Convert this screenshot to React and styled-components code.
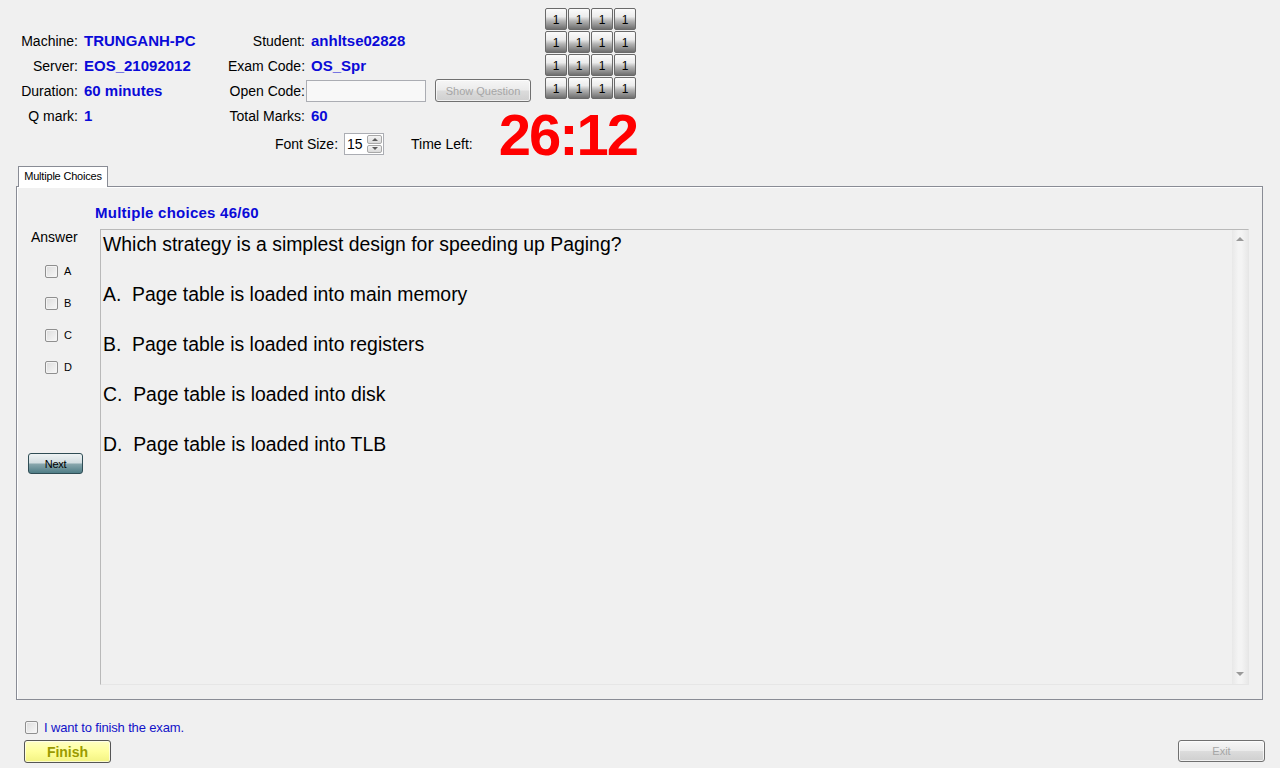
import React from "react"
import styled, { createGlobalStyle } from "styled-components"

const GlobalStyle = createGlobalStyle`
  body {
    margin: 0;
    background: #f0f0f0;
    font-family: "Liberation Sans", Arial, sans-serif;
    color: #000;
  }
`

const Screen = styled.div`
  width: 1280px;
  height: 768px;
  overflow: hidden;
  display: flex;
  flex-direction: column;
`

const Header = styled.div`
  display: flex;
  align-items: flex-start;
  padding: 8px 0 0 20px;
`

const LeftBlock = styled.div`
  display: flex;
  flex-direction: column;
  margin-top: 20px;
`

const InfoRow = styled.div`
  display: flex;
`

const InfoGrid = styled.div`
  display: grid;
  grid-template-columns: ${p => p.labelWidth}px auto;
  grid-auto-rows: 25px;
  column-gap: 1px;
  align-items: center;
  width: ${p => (p.width ? `${p.width}px` : "auto")};
`

const Label = styled.span`
  font-size: 14px;
  text-align: right;
  white-space: nowrap;
`

const Value = styled.span`
  font-size: 15px;
  font-weight: bold;
  color: #0a0ad8;
  padding-left: 5px;
  white-space: nowrap;
`

const CodeCell = styled.div`
  display: flex;
  align-items: center;
  gap: 9px;
`

const TextBox = styled.div`
  width: 120px;
  height: 22px;
  box-sizing: border-box;
  border: 1px solid #abadb3;
  background: #f8f8f8;
`

const WinButton = styled.button`
  width: ${p => p.w}px;
  height: ${p => p.h}px;
  box-sizing: border-box;
  padding: 0;
  border: 1px solid #707070;
  border-radius: 3px;
  background: linear-gradient(#f6f6f6, #ebebeb 48%, #dcdcdc 52%, #cfcfcf);
  color: #a6a6a6;
  font-family: "Liberation Sans", Arial, sans-serif;
  font-size: 11px;
  box-shadow: inset 0 0 0 1px rgba(255, 255, 255, 0.7);
`

const FontRow = styled.div`
  display: flex;
  align-items: center;
  height: 22px;
  margin-top: 5px;
  padding-left: 255px;
`

const Spinner = styled.div`
  display: flex;
  width: 40px;
  height: 22px;
  box-sizing: border-box;
  margin-left: 6px;
  border: 1px solid #abadb3;
  background: #fff;
`

const SpinValue = styled.span`
  flex: 1;
  font-size: 14px;
  line-height: 20px;
  padding-left: 2px;
`

const SpinButtons = styled.div`
  display: flex;
  flex-direction: column;
  width: 15px;
  gap: 1px;
  padding: 1px 1px 1px 0;
`

const SpinButton = styled.div`
  flex: 1;
  display: flex;
  align-items: center;
  justify-content: center;
  border: 1px solid #a8a8a8;
  border-radius: 2px;
  background: linear-gradient(#f4f4f4, #dadada);
`

const Arrow = styled.span`
  width: 0;
  height: 0;
  border-left: 3px solid transparent;
  border-right: 3px solid transparent;
  ${p =>
    p.down
      ? "border-top: 3px solid #5a5a5a;"
      : "border-bottom: 3px solid #5a5a5a;"}
`

const TimeLabel = styled(Label)`
  margin-left: 27px;
`

const RightBlock = styled.div`
  width: 91px;
  display: flex;
  flex-direction: column;
  align-items: flex-end;
  margin-left: 14px;
`

const QuestionGrid = styled.div`
  display: grid;
  grid-template-columns: repeat(4, 22px);
  grid-auto-rows: 22px;
  gap: 1px;
`

const QButton = styled.div`
  box-sizing: border-box;
  border: 1px solid #6a6a6a;
  border-radius: 2px;
  background: linear-gradient(#fbfbfb, #ececec 38%, #b4b4b4 60%, #6e6e6e);
  display: flex;
  align-items: center;
  justify-content: center;
  font-size: 12px;
  padding-top: 1px;
`

const Timer = styled.div`
  margin-top: 6px;
  margin-right: -1px;
  font-size: 58px;
  line-height: 60px;
  font-weight: bold;
  letter-spacing: -2px;
  color: #ff0000;
  white-space: nowrap;
`

const TabArea = styled.div`
  display: flex;
  flex-direction: column;
  margin: 1px 0 0 16px;
  width: 1247px;
`

const TabStrip = styled.div`
  display: flex;
  padding-left: 2px;
  position: relative;
  z-index: 1;
  margin-bottom: -1px;
`

const Tab = styled.div`
  width: 90px;
  height: 21px;
  box-sizing: border-box;
  border: 1px solid #898c95;
  border-bottom: none;
  background: #fff;
  font-size: 11px;
  line-height: 19px;
  text-align: center;
  letter-spacing: -0.2px;
`

const TabPanel = styled.div`
  height: 514px;
  box-sizing: border-box;
  border: 1px solid #898c95;
  box-shadow: inset 1px 1px 0 #fff;
  display: flex;
  flex-direction: column;
  padding: 18px 13px 14px 0;
`

const SectionTitle = styled.div`
  font-size: 15px;
  font-weight: bold;
  line-height: 16px;
  letter-spacing: 0.25px;
  color: #0a0ad8;
  padding-left: 78px;
`

const Body = styled.div`
  flex: 1;
  display: flex;
  margin-top: 8px;
`

const AnswerCol = styled.div`
  width: 83px;
  display: flex;
  flex-direction: column;
`

const AnswerTitle = styled.div`
  font-size: 14px;
  line-height: 16px;
  padding-left: 14px;
`

const Choices = styled.div`
  display: flex;
  flex-direction: column;
  margin-top: 10px;
  padding-left: 28px;
`

const ChoiceRow = styled.label`
  display: flex;
  align-items: center;
  height: 32px;
  gap: 6px;
  font-size: 11px;
`

const Check = styled.span`
  width: 13px;
  height: 13px;
  box-sizing: border-box;
  border: 1px solid #8f8f8f;
  border-radius: 2px;
  background: linear-gradient(135deg, #dcdcdc, #f8f8f8);
  box-shadow: inset 0 0 0 1px #f4f4f4;
  flex: none;
`

const NextButton = styled.button`
  width: 55px;
  height: 21px;
  margin: 70px 0 0 11px;
  padding: 0;
  box-sizing: border-box;
  border: 1px solid #2f4d55;
  border-radius: 3px;
  background: linear-gradient(#eef3f4, #d3dee1 45%, #86a5ab 55%, #4f7d86);
  font-family: "Liberation Sans", Arial, sans-serif;
  font-size: 11px;
  letter-spacing: -0.3px;
  color: #000;
`

const QuestionBox = styled.div`
  flex: 1;
  display: flex;
  border: 1px solid #b9b9b9;
  border-right-color: #e6e6e6;
  border-bottom-color: #e6e6e6;
  background: #f0f0f0;
`

const QuestionText = styled.div`
  flex: 1;
  padding: 2px 0 0 2px;
  font-size: 19.4px;
  line-height: 25px;
  white-space: pre-wrap;
`

const ScrollTrack = styled.div`
  width: 16px;
  display: flex;
  flex-direction: column;
  justify-content: space-between;
  align-items: center;
  padding: 7px 0 8px;
  background: linear-gradient(90deg, #e8e8e8, #f4f4f4 40%, #f4f4f4 60%, #e8e8e8);
`

const ScrollArrow = styled.span`
  width: 0;
  height: 0;
  border-left: 4px solid transparent;
  border-right: 4px solid transparent;
  ${p =>
    p.down
      ? "border-top: 4px solid #9a9a9a;"
      : "border-bottom: 4px solid #9a9a9a;"}
`

const Footer = styled.div`
  display: flex;
  flex-direction: column;
  padding-right: 15px;
`

const FinishRow = styled.label`
  display: flex;
  align-items: center;
  gap: 6px;
  height: 16px;
  margin-top: 19px;
  padding-left: 25px;
  font-size: 13px;
  color: #1212c8;
  letter-spacing: -0.15px;
`

const ButtonRow = styled.div`
  display: flex;
  justify-content: space-between;
  align-items: flex-start;
  margin-top: 5px;
  padding-left: 24px;
`

const FinishButton = styled.button`
  width: 87px;
  height: 23px;
  padding: 0;
  box-sizing: border-box;
  border: 1px solid #555;
  border-radius: 3px;
  background: linear-gradient(#ffffc4, #ffff9c 50%, #f3f382);
  box-shadow: inset 0 0 0 1px rgba(255, 255, 255, 0.6);
  font-family: "Liberation Sans", Arial, sans-serif;
  font-size: 14px;
  font-weight: bold;
  color: #9a9a00;
`

const header = [
  ["Machine:", "TRUNGANH-PC"],
  ["Server:", "EOS_21092012"],
  ["Duration:", "60 minutes"],
  ["Q mark:", "1"],
]

const choices = ["A", "B", "C", "D"]

const question = `Which strategy is a simplest design for speeding up Paging?

A.  Page table is loaded into main memory

B.  Page table is loaded into registers

C.  Page table is loaded into disk

D.  Page table is loaded into TLB`

export default function App() {
  return (
    <Screen>
      <GlobalStyle />
      <Header>
        <LeftBlock>
          <InfoRow>
            <InfoGrid labelWidth={58} width={208}>
              {header.map(([l, v]) => (
                <React.Fragment key={l}>
                  <Label>{l}</Label>
                  <Value>{v}</Value>
                </React.Fragment>
              ))}
            </InfoGrid>
            <InfoGrid labelWidth={77}>
              <Label>Student:</Label>
              <Value>anhltse02828</Value>
              <Label>Exam Code:</Label>
              <Value>OS_Spr</Value>
              <Label>Open Code:</Label>
              <CodeCell>
                <TextBox />
                <WinButton w={96} h={23}>Show Question</WinButton>
              </CodeCell>
              <Label>Total Marks:</Label>
              <Value>60</Value>
            </InfoGrid>
          </InfoRow>
          <FontRow>
            <Label>Font Size:</Label>
            <Spinner>
              <SpinValue>15</SpinValue>
              <SpinButtons>
                <SpinButton><Arrow /></SpinButton>
                <SpinButton><Arrow down /></SpinButton>
              </SpinButtons>
            </Spinner>
            <TimeLabel>Time Left:</TimeLabel>
          </FontRow>
        </LeftBlock>
        <RightBlock>
          <QuestionGrid>
            {Array.from({ length: 16 }).map((_, i) => (
              <QButton key={i}>1</QButton>
            ))}
          </QuestionGrid>
          <Timer>26:12</Timer>
        </RightBlock>
      </Header>

      <TabArea>
        <TabStrip>
          <Tab>Multiple Choices</Tab>
        </TabStrip>
        <TabPanel>
          <SectionTitle>Multiple choices 46/60</SectionTitle>
          <Body>
            <AnswerCol>
              <AnswerTitle>Answer</AnswerTitle>
              <Choices>
                {choices.map(c => (
                  <ChoiceRow key={c}>
                    <Check />
                    {c}
                  </ChoiceRow>
                ))}
              </Choices>
              <NextButton>Next</NextButton>
            </AnswerCol>
            <QuestionBox>
              <QuestionText>{question}</QuestionText>
              <ScrollTrack>
                <ScrollArrow />
                <ScrollArrow down />
              </ScrollTrack>
            </QuestionBox>
          </Body>
        </TabPanel>
      </TabArea>

      <Footer>
        <FinishRow>
          <Check />
          I want to finish the exam.
        </FinishRow>
        <ButtonRow>
          <FinishButton>Finish</FinishButton>
          <WinButton w={87} h={22}>Exit</WinButton>
        </ButtonRow>
      </Footer>
    </Screen>
  )
}
